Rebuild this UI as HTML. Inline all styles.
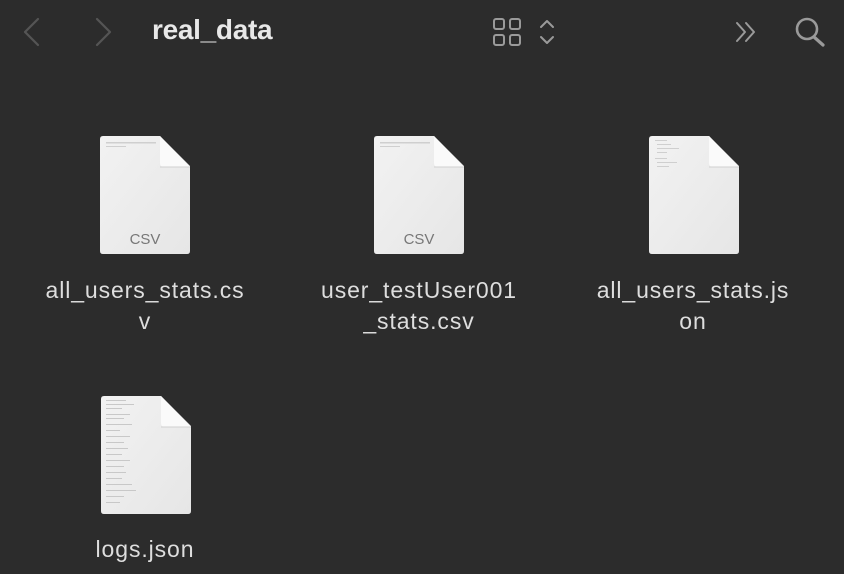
<!DOCTYPE html>
<html><head><meta charset="utf-8"><style>
html,body{margin:0;padding:0;background:#2c2c2c;width:844px;height:574px;overflow:hidden;font-family:"Liberation Sans",sans-serif;}
.abs{position:absolute;}
.title{left:152px;top:14px;font-size:28px;font-weight:bold;color:#e8e8e8;letter-spacing:-0.3px;}
.lbl{position:absolute;width:280px;text-align:center;color:#dedede;font-size:23px;line-height:31px;letter-spacing:0.9px;}
</style></head><body>
<svg class="abs" style="left:0;top:0" width="844" height="70">
<g fill="none" stroke-linecap="round" stroke-linejoin="round">
<path d="M38 19 L25 32 L38 45" stroke="#555" stroke-width="2.2"/>
<path d="M97 19 L110 32 L97 45" stroke="#555" stroke-width="2.2"/>
<g stroke="#9a9a9a" stroke-width="2">
<rect x="494" y="19" width="10" height="10" rx="2"/><rect x="510" y="19" width="10" height="10" rx="2"/>
<rect x="494" y="35" width="10" height="10" rx="2"/><rect x="510" y="35" width="10" height="10" rx="2"/>
<path d="M541 27 L547 21 L553 27 M541 37 L547 43 L553 37"/>
<path d="M737 23 L745 32 L737 41 M746 23 L754 32 L746 41"/>
<circle cx="807" cy="29" r="10" stroke-width="2.6"/><path d="M814 37 L823 45" stroke-width="3.2"/>
</g></g></svg>
<div class="abs title">real_data</div>

<svg class="abs" style="left:0;top:0" width="844" height="574">
<defs>
<linearGradient id="g" x1="0" y1="0" x2="1" y2="1"><stop offset="0" stop-color="#f2f2f2"/><stop offset="1" stop-color="#e6e6e6"/></linearGradient>
<g id="f">
<path d="M3 0 H60 L90 30 V115 Q90 118 87 118 H3 Q0 118 0 115 V3 Q0 0 3 0Z" fill="url(#g)"/>
<path d="M60 0 V27 Q60 31 64 31 H90 Z" fill="#fafafa"/>
<path d="M60 31 H90" stroke="#d0d0d0" stroke-width="1"/>
</g>
</defs>
<use href="#f" x="100" y="136"/>
<use href="#f" x="374" y="136"/>
<use href="#f" x="649" y="136"/>
<use href="#f" x="101" y="396"/>
<g fill="#cfcfcf">
<rect x="106" y="142" width="50" height="1.5"/><rect x="106" y="146" width="20" height="1"/>
<rect x="380" y="142" width="50" height="1.5"/><rect x="380" y="146" width="20" height="1"/>
<rect x="655" y="140" width="12" height="1"/><rect x="657" y="144" width="14" height="1"/><rect x="657" y="148" width="22" height="1"/><rect x="657" y="152" width="10" height="1"/><rect x="655" y="158" width="12" height="1"/><rect x="657" y="162" width="20" height="1"/><rect x="657" y="166" width="12" height="1"/>
</g>
<g fill="#c8c8c8">
<rect x="106" y="400" width="20" height="1"/><rect x="106" y="404" width="28" height="1"/><rect x="106" y="408" width="16" height="1"/><rect x="106" y="414" width="24" height="1"/><rect x="106" y="418" width="18" height="1"/><rect x="106" y="424" width="26" height="1"/><rect x="106" y="430" width="14" height="1"/><rect x="106" y="436" width="24" height="1"/><rect x="106" y="442" width="18" height="1"/><rect x="106" y="448" width="22" height="1"/><rect x="106" y="454" width="16" height="1"/><rect x="106" y="460" width="24" height="1"/><rect x="106" y="466" width="18" height="1"/><rect x="106" y="472" width="20" height="1"/><rect x="106" y="478" width="16" height="1"/><rect x="106" y="484" width="26" height="1"/><rect x="106" y="490" width="30" height="1"/><rect x="106" y="496" width="18" height="1"/><rect x="106" y="502" width="14" height="1"/>
</g>
<text x="145" y="244" text-anchor="middle" font-family="Liberation Sans" font-size="15" fill="#777">CSV</text>
<text x="419" y="244" text-anchor="middle" font-family="Liberation Sans" font-size="15" fill="#777">CSV</text>
</svg>

<div class="lbl" style="left:5px;top:275px">all_users_stats.cs<br>v</div>
<div class="lbl" style="left:279px;top:275px">user_testUser001<br>_stats.csv</div>
<div class="lbl" style="left:553px;top:275px">all_users_stats.js<br>on</div>
<div class="lbl" style="left:5px;top:534px">logs.json</div>
</body></html>
